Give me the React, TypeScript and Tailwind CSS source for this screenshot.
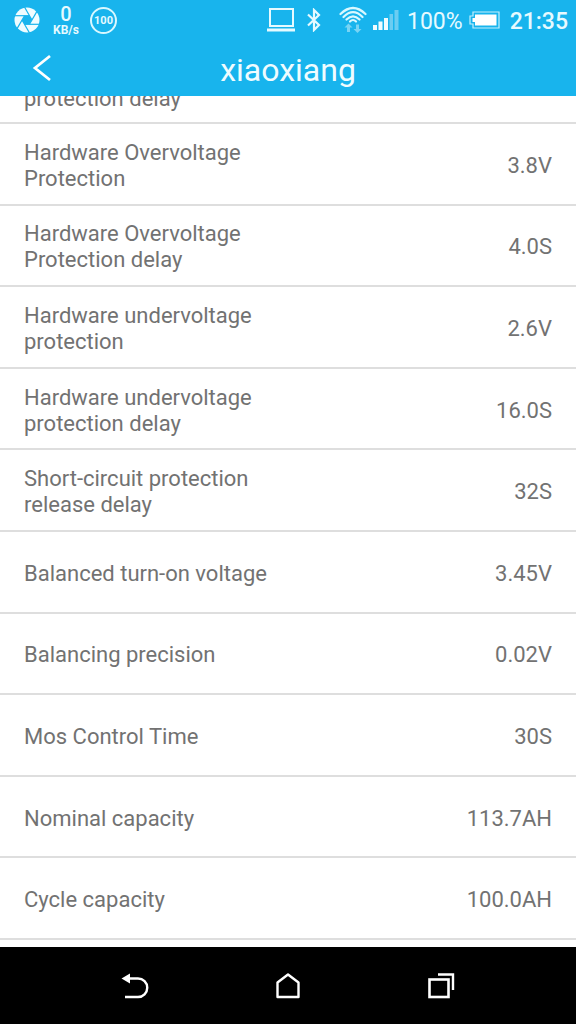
import React from "react";

type Param = {
  label: string;
  value: string;
};

const params: Param[] = [
  { label: "Hardware Overvoltage Protection", value: "3.8V" },
  { label: "Hardware Overvoltage Protection delay", value: "4.0S" },
  { label: "Hardware undervoltage protection", value: "2.6V" },
  { label: "Hardware undervoltage protection delay", value: "16.0S" },
  { label: "Short-circuit protection release delay", value: "32S" },
  { label: "Balanced turn-on voltage", value: "3.45V" },
  { label: "Balancing precision", value: "0.02V" },
  { label: "Mos Control Time", value: "30S" },
  { label: "Nominal capacity", value: "113.7AH" },
  { label: "Cycle capacity", value: "100.0AH" },
];

const bladeAngles = [0, 60, 120, 180, 240, 300];

// Camera shutter: a disc with a hexagonal opening and six blade gaps
const ShutterIcon = () => (
  <svg width="26" height="26" viewBox="0 0 26 26" aria-hidden="true">
    <circle cx="13" cy="13" r="12.5" fill="#effcff" />
    <path d="M10.5 8.7 H15.5 L18 13 L15.5 17.3 H10.5 L8 13 Z" fill="#18b4ed" />
    {bladeAngles.map((angle) => (
      <path
        key={angle}
        d="M15.5 8.7 H0"
        transform={`rotate(${angle} 13 13)`}
        stroke="#18b4ed"
        strokeWidth="1.2"
      />
    ))}
  </svg>
);

const LaptopIcon = () => (
  <svg width="28" height="24" viewBox="0 0 28 24" fill="none" stroke="#e6faff" strokeWidth="2" aria-hidden="true">
    <rect x="3" y="1" width="23" height="17" />
    <path d="M0 22 H28" strokeWidth="3" />
  </svg>
);

const BluetoothIcon = () => (
  <svg width="16" height="24" viewBox="0 0 16 24" fill="none" stroke="#e6faff" strokeWidth="2.2" aria-hidden="true">
    <path d="M1 6.5 L12 17 L7 22 V2 L12 7 L1 17.5" />
  </svg>
);

const WifiIcon = () => (
  <svg width="28" height="28" viewBox="0 0 28 28" fill="none" stroke="#d9f8ff" strokeWidth="2.2" strokeLinecap="round" aria-hidden="true">
    <path d="M1.5 8 Q14 -4 26.5 8 M4.5 11 Q14 1.5 23.5 11 M7.5 13.5 Q14 7 20.5 13.5" />
    <path d="M11 15.5 Q14 12.5 17 15.5" />
    <path
      d="M9.5 17.5 L13.5 21.5 H11 V26 H8 V21.5 H5.5 Z M18.5 27 L14.5 23 H17 V18.5 H20 V23 H22.5 Z"
      fill="#79d4f4"
      stroke="none"
    />
  </svg>
);

const SignalIcon = () => (
  <svg width="26" height="20" viewBox="0 0 26 20" aria-hidden="true">
    <path d="M0 15 H4 V20 H0 Z M5.5 11.5 H9.5 V20 H5.5 Z M11 8 H15 V20 H11 Z" fill="#effcff" />
    <path d="M16.5 4 H20 V20 H16.5 Z M21.5 0 H25.5 V20 H21.5 Z" fill="#6bcdf2" />
  </svg>
);

const BatteryIcon = () => (
  <svg width="31" height="18" viewBox="0 0 31 18" aria-hidden="true">
    <path d="M4 1 H30 V17 H4 V13 H1 V5 H4 Z" fill="none" stroke="#c4f0fd" strokeWidth="1.2" />
    <path d="M6 3.5 H27.5 V14.5 H6 V11 H3.5 V7 H6 Z" fill="#fff" />
  </svg>
);

const StatusBar = () => (
  <div className="flex h-10 items-center justify-between pr-2 pl-3.5 text-[#e6faff]">
    <div className="flex items-center">
      <ShutterIcon />
      <div className="ml-3 flex w-7 flex-col items-center">
        <span className="text-xl leading-5 font-medium">0</span>
        <span className="text-xs leading-3 font-bold">KB/s</span>
      </div>
      <span className="ml-2.5 flex size-[27px] items-center justify-center rounded-full border-2 border-[#d9f8ff] text-[11px] leading-none font-bold">
        100
      </span>
    </div>
    <div className="flex items-center">
      <LaptopIcon />
      <span className="ml-3 flex">
        <BluetoothIcon />
      </span>
      <span className="ml-4 flex">
        <WifiIcon />
      </span>
      <span className="ml-1.5 flex">
        <SignalIcon />
      </span>
      <span className="ml-2 pt-1 text-[23px] leading-9">100%</span>
      <span className="ml-1.5 flex">
        <BatteryIcon />
      </span>
      <span className="ml-2.5 pt-1 text-[23px] leading-9 font-medium">21:35</span>
    </div>
  </div>
);

const TitleBar = () => (
  <div className="grid h-14 grid-cols-[80px_1fr_80px] items-center">
    <button type="button" aria-label="Back" className="flex h-full items-center pl-8">
      <svg width="20" height="28" viewBox="0 0 20 28" fill="none" stroke="#fff" strokeWidth="2.8" aria-hidden="true">
        <path d="M18 2 L3 14 L18 26" />
      </svg>
    </button>
    <h1 className="pt-1 text-center text-[32px] leading-10 text-[#effcff]">xiaoxiang</h1>
  </div>
);

const ParamRow = ({ label, value }: Param) => (
  <div className="flex items-center justify-between border-b-2 border-[#dedede] px-6 pt-1">
    <dt className="w-1/2">{label}</dt>
    <dd>{value}</dd>
  </div>
);

const NavBar = () => (
  <nav className="flex h-[77px] shrink-0 items-center justify-center gap-[105px] bg-black">
    <button type="button" aria-label="Back" className="flex w-12 justify-center">
      <svg width="28" height="26" viewBox="0 0 28 26" fill="none" stroke="#fff" strokeWidth="2.4" aria-hidden="true">
        <path d="M8 5.5 H17 A9.2 9.2 0 0 1 17 24 H4" />
        <path d="M0.5 5.5 L9 0.5 V10.5 Z" fill="#fff" stroke="none" />
      </svg>
    </button>
    <button type="button" aria-label="Home" className="flex w-12 justify-center">
      <svg width="24" height="26" viewBox="0 0 24 26" fill="none" stroke="#fff" strokeWidth="2.4" strokeLinejoin="round" aria-hidden="true">
        <path d="M1.5 9.5 L12 1.5 L22.5 9.5 V24 H1.5 Z" />
      </svg>
    </button>
    <button type="button" aria-label="Recent apps" className="flex w-12 justify-center">
      <svg width="28" height="26" viewBox="0 0 28 26" fill="none" stroke="#fff" strokeWidth="2.6" aria-hidden="true">
        <rect x="2.5" y="6.5" width="19" height="17.5" />
        <path d="M11 1.5 H26 V17" strokeWidth="2.4" />
      </svg>
    </button>
  </nav>
);

const App = () => {
  return (
    <div className="flex min-h-screen flex-col bg-white font-[Roboto,'Liberation_Sans',sans-serif]">
      <header className="h-24 shrink-0 bg-[#18b4ed]">
        <StatusBar />
        <TitleBar />
      </header>

      <main className="flex flex-1 flex-col pb-[7px]">
        {/* First row is partly scrolled under the header */}
        <dl className="grid flex-1 auto-rows-fr grid-rows-[28px] text-[22px] leading-[26px] text-[#727272]">
          <div className="flex items-end overflow-hidden border-b-2 border-[#dedede] px-6 pb-2.5">
            <dt className="w-1/2">protection delay</dt>
          </div>
          {params.map((param) => (
            <ParamRow key={param.label} label={param.label} value={param.value} />
          ))}
        </dl>
      </main>

      <NavBar />
    </div>
  );
};

export default App;
